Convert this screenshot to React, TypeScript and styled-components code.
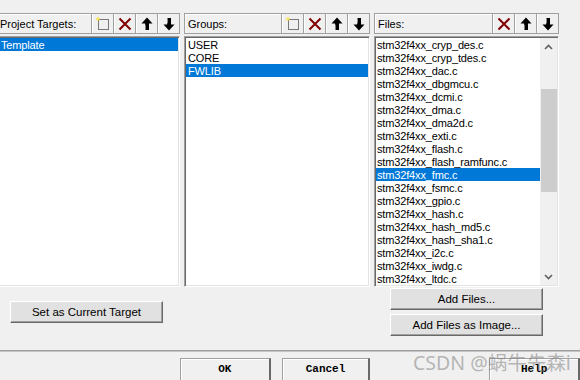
import React from 'react'
import styled, { createGlobalStyle } from 'styled-components'

const GlobalStyle = createGlobalStyle`
    html, body {
        margin: 0;
        padding: 0;
        background: #f0f0f0;
        overflow: hidden;
    }
    body {
        font-family: 'Liberation Sans', Arial, sans-serif;
        font-size: 11px;
        color: #000;
    }
`

const Dialog = styled.div`
    position: relative;
    width: 580px;
    height: 380px;
    overflow: hidden;
    background: #f0f0f0;
`

const Panels = styled.div`
    display: grid;
    grid-template-columns: 186px 186px 185px;
    column-gap: 4px;
    margin-left: -6px;
    padding-top: 13px;
`

const Panel = styled.div`
    display: flex;
    flex-direction: column;
    gap: 2px;
`

const Header = styled.div`
    height: 19px;
    display: flex;
    align-items: stretch;
    border: 1px solid #a0a0a0;
    box-shadow: inset 1px 1px #fff;
`

const HeaderLabel = styled.div<{ $indent: number }>`
    flex: 1;
    display: flex;
    align-items: center;
    padding-left: ${p => p.$indent}px;
    font-size: 11px;
`

const ToolButton = styled.button`
    width: 22px;
    padding: 0;
    margin: 0;
    display: flex;
    align-items: center;
    justify-content: center;
    background: #f0f0f0;
    border: none;
    border-left: 1px solid #a0a0a0;
    box-shadow: inset 1px 0 #fff;
`

const List = styled.div`
    position: relative;
    height: 247px;
    display: flex;
    background: #fff;
    border-top: 1px solid #a0a0a0;
    border-left: 1px solid #a0a0a0;
    border-bottom: 1px solid #fff;
    border-right: 1px solid #fff;
    box-shadow: inset 1px 1px #696969, inset -1px -1px #e3e3e3;
    padding: 1px;
`

const Rows = styled.div`
    flex: 1;
    overflow: hidden;
`

const Row = styled.div<{ $selected?: boolean; $indent: number }>`
    height: 13px;
    line-height: 14px;
    padding-left: ${p => p.$indent}px;
    white-space: nowrap;
    letter-spacing: -0.15px;
    background: ${p => (p.$selected ? '#0078d7' : 'transparent')};
    color: ${p => (p.$selected ? '#fff' : '#000')};
`

const ScrollBar = styled.div`
    width: 17px;
    display: flex;
    flex-direction: column;
    background: #f0f0f0;
`

const ScrollArrow = styled.div`
    height: 17px;
    display: flex;
    align-items: center;
    justify-content: center;
`

const Track = styled.div`
    flex: 1;
    display: flex;
    flex-direction: column;
    padding: 0 0 0 1px;
`

const Thumb = styled.div`
    margin-top: 34px;
    height: 103px;
    background: #cdcdcd;
`

const Lower = styled.div`
    height: 63px;
    display: flex;
    align-items: flex-start;
`

const PushButton = styled.button<{ $width: number }>`
    width: ${p => p.$width}px;
    height: 22px;
    padding: 0;
    font-family: 'Liberation Sans', Arial, sans-serif;
    font-size: 11.5px;
    color: #000;
    background: #e1e1e1;
    border-top: 1px solid #fff;
    border-left: 1px solid #fff;
    border-right: 1px solid #696969;
    border-bottom: 1px solid #696969;
    box-shadow: inset -1px -1px #a0a0a0, inset 1px 1px #e3e3e3;
`

const SetButton = styled(PushButton)`
    margin: 14px 0 0 10px;
`

const AddColumn = styled.div`
    display: flex;
    flex-direction: column;
    gap: 4px;
    margin: 1px 0 0 227px;
`

const Separator = styled.div`
    height: 0;
    border-top: 1px solid #a0a0a0;
    border-bottom: 1px solid #c4c4c4;
`

const BottomBar = styled.div`
    display: flex;
    padding-top: 6px;
`

const DialogButton = styled.button<{ $left: number; $width: number }>`
    margin-left: ${p => p.$left}px;
    width: ${p => p.$width}px;
    height: 26px;
    padding: 0 0 4px;
    font-family: 'Liberation Mono', 'Courier New', monospace;
    font-size: 11px;
    font-weight: bold;
    color: #000;
    background: #f0f0f0;
    border-top: 1px solid #a0a0a0;
    border-left: 1px solid #a0a0a0;
    border-right: 2px solid #696969;
    border-bottom: 2px solid #696969;
    box-shadow: inset 1px 1px #fff;
`

const Watermark = styled.div`
    position: absolute;
    left: 413px;
    top: 347px;
    font-family: 'Noto Sans', 'Noto Sans CJK SC', sans-serif;
    font-size: 19.5px;
    color: rgba(120, 120, 120, 0.5);
    white-space: nowrap;
    pointer-events: none;
`

const NewIcon = () => (
    <svg width="16" height="16" viewBox="0 0 16 16">
        <rect x="3.5" y="3.5" width="10" height="10" fill="none" stroke="#000" strokeDasharray="1 1" />
        <path d="M3 0.5 L3.7 2.3 L5.5 3 L3.7 3.7 L3 5.5 L2.3 3.7 L0.5 3 L2.3 2.3 Z" fill="#f5d800" />
        <circle cx="3" cy="3" r="0.8" fill="#fff8b0" />
    </svg>
)

const DeleteIcon = () => (
    <svg width="16" height="16" viewBox="0 0 16 16">
        <path d="M2.5 2.5 L13.5 13.5 M13.5 2.5 L2.5 13.5" stroke="#800000" strokeWidth="2" />
    </svg>
)

const UpIcon = () => (
    <svg width="16" height="16" viewBox="0 0 16 16">
        <path d="M8 1.5 L13.5 7.5 L10 7.5 L10 14 L6.5 14 Q7 10 6 7.5 L2.5 7.5 Z" fill="#000" />
    </svg>
)

const DownIcon = () => (
    <svg width="16" height="16" viewBox="0 0 16 16">
        <path d="M8 14.5 L13.5 8.5 L10 8.5 L10 2 L6.5 2 Q7 6 6 8.5 L2.5 8.5 Z" fill="#000" />
    </svg>
)

const Chevron = ({ up }: { up?: boolean }) => (
    <svg width="9" height="6" viewBox="0 0 9 6">
        <path d={up ? 'M1 5 L4.5 1.5 L8 5' : 'M1 1 L4.5 4.5 L8 1'} fill="none" stroke="#606060" strokeWidth="1.6" />
    </svg>
)

const files = [
    'cryp_des',
    'cryp_tdes',
    'dac',
    'dbgmcu',
    'dcmi',
    'dma',
    'dma2d',
    'exti',
    'flash',
    'flash_ramfunc',
    'fmc',
    'fsmc',
    'gpio',
    'hash',
    'hash_md5',
    'hash_sha1',
    'i2c',
    'iwdg',
    'ltdc',
].map(f => `stm32f4xx_${f}.c`)

const groups = ['USER', 'CORE', 'FWLIB']

const App: React.FunctionComponent = () => (
    <Dialog>
        <GlobalStyle />
        <Panels>
            <Panel>
                <Header>
                    <HeaderLabel $indent={5}>Project Targets:</HeaderLabel>
                    <ToolButton><NewIcon /></ToolButton>
                    <ToolButton><DeleteIcon /></ToolButton>
                    <ToolButton><UpIcon /></ToolButton>
                    <ToolButton><DownIcon /></ToolButton>
                </Header>
                <List>
                    <Rows>
                        <Row $selected $indent={5}>Template</Row>
                    </Rows>
                </List>
            </Panel>
            <Panel>
                <Header>
                    <HeaderLabel $indent={3}>Groups:</HeaderLabel>
                    <ToolButton><NewIcon /></ToolButton>
                    <ToolButton><DeleteIcon /></ToolButton>
                    <ToolButton><UpIcon /></ToolButton>
                    <ToolButton><DownIcon /></ToolButton>
                </Header>
                <List>
                    <Rows>
                        {groups.map(g => (
                            <Row key={g} $selected={g === 'FWLIB'} $indent={2}>{g}</Row>
                        ))}
                    </Rows>
                </List>
            </Panel>
            <Panel>
                <Header>
                    <HeaderLabel $indent={3}>Files:</HeaderLabel>
                    <ToolButton><DeleteIcon /></ToolButton>
                    <ToolButton><UpIcon /></ToolButton>
                    <ToolButton><DownIcon /></ToolButton>
                </Header>
                <List>
                    <Rows>
                        {files.map(f => (
                            <Row key={f} $selected={f === 'stm32f4xx_fmc.c'} $indent={1}>{f}</Row>
                        ))}
                    </Rows>
                    <ScrollBar>
                        <ScrollArrow><Chevron up /></ScrollArrow>
                        <Track><Thumb /></Track>
                        <ScrollArrow><Chevron /></ScrollArrow>
                    </ScrollBar>
                </List>
            </Panel>
        </Panels>
        <Lower>
            <SetButton $width={153}>Set as Current Target</SetButton>
            <AddColumn>
                <PushButton $width={153}>Add Files...</PushButton>
                <PushButton $width={153}>Add Files as Image...</PushButton>
            </AddColumn>
        </Lower>
        <Separator />
        <BottomBar>
            <DialogButton $left={180} $width={92}>OK</DialogButton>
            <DialogButton $left={11} $width={90}>Cancel</DialogButton>
            <DialogButton $left={119} $width={92}>Help</DialogButton>
        </BottomBar>
        <Watermark>CSDN @蜗牛先森i</Watermark>
    </Dialog>
)

export default App
